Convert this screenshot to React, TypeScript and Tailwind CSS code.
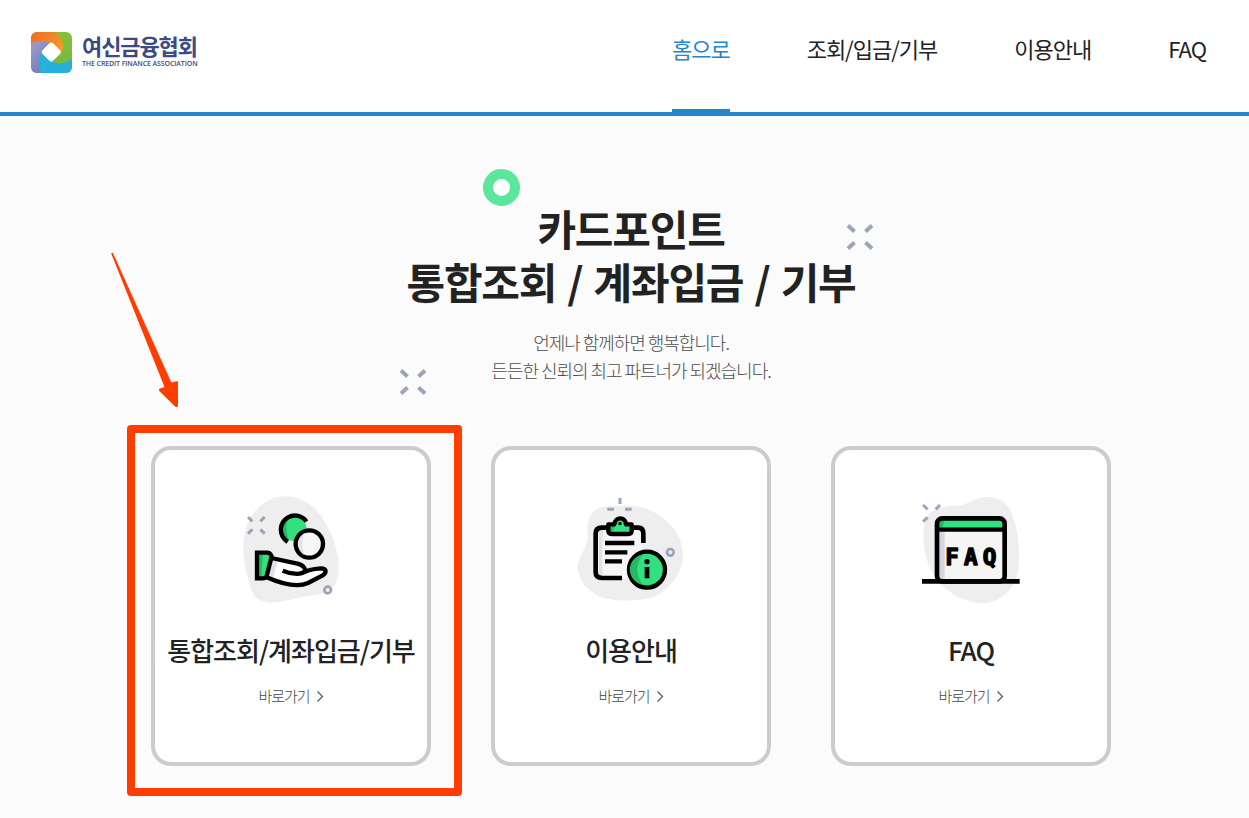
import type { ReactNode } from "react";

const navItems = [
  { name: "홈으로", active: true },
  { name: "조회/입금/기부", active: false },
  { name: "이용안내", active: false },
  { name: "FAQ", active: false },
];

const Logo = () => (
  <svg width="41" height="41" viewBox="0 0 41 41">
    <defs>
      <clipPath id="logo-clip">
        <rect width="41" height="41" rx="6" />
      </clipPath>
      <linearGradient id="logo-orange" x1="0" y1="0" x2="1" y2="0.6">
        <stop offset="0" stopColor="#ee6a2c" />
        <stop offset="1" stopColor="#f39a1f" />
      </linearGradient>
      <linearGradient id="logo-green" x1="0" y1="0" x2="0" y2="1">
        <stop offset="0" stopColor="#86bf3a" />
        <stop offset="1" stopColor="#6fb844" />
      </linearGradient>
      <linearGradient id="logo-cyan" x1="1" y1="0" x2="0" y2="1">
        <stop offset="0" stopColor="#2fa9d8" />
        <stop offset="1" stopColor="#1fb6dd" />
      </linearGradient>
      <linearGradient id="logo-purple" x1="0" y1="0" x2="0.6" y2="1">
        <stop offset="0" stopColor="#a09ccd" />
        <stop offset="1" stopColor="#6f7cbc" />
      </linearGradient>
    </defs>
    <g clipPath="url(#logo-clip)">
      <rect width="41" height="41" fill="url(#logo-green)" />
      <path d="M0 0H24C32 5 34 13 30 22L20 12L0 14Z" fill="url(#logo-orange)" />
      <path d="M0 12C8 8 15 9 20 12L11 21C8 28 9 35 12 41H0Z" fill="url(#logo-purple)" />
      <path d="M10 20L21 30C29 33 36 31 41 26V41H11C7 34 7 27 10 20Z" fill="url(#logo-cyan)" />
      <rect x="12.8" y="12.6" width="15" height="15" rx="3" transform="rotate(45 20.3 20.1)" fill="#fff" />
    </g>
  </svg>
);

const Sparkle = () => (
  <svg width="28" height="28" viewBox="0 0 28 28" stroke="#9aa5b8" strokeWidth="4">
    <path d="M2 2.5L8.5 8.5M26 2.5L19.5 8.5M2 25.5L8.5 19.5M26 25.5L19.5 19.5" />
  </svg>
);

const HandIcon = () => (
  <svg width="130" height="130" viewBox="-12 0 390 390" fill="none">
    <path d="M158 34C215 28 262 66 288 118C311 158 327 205 326 252C325 301 300 325 262 329C211 333 168 351 125 353C82 352 67 331 60 302C48 257 37 219 40 175C44 98 94 38 158 34Z" fill="#eee" />
    <path d="M54 96L67 109M104 96L91 109M54 146L67 133M104 146L91 133" stroke="#9aa5b8" strokeWidth="9" />
    <circle cx="293" cy="315" r="10" stroke="#9aa5b8" strokeWidth="8" />
    <circle cx="191" cy="130" r="38" fill="#33e07f" />
    <path d="M178 94C151 104 150 151 178 166C167 145 167 115 178 94Z" fill="#26b863" />
    <path d="M229 110C218 91 192 87 174 97C147 113 144 150 173 171" stroke="#000" strokeWidth="13" />
    <circle cx="238" cy="177" r="41" fill="#f6f6f6" stroke="#000" strokeWidth="13" />
    <path d="M224 144C200 156 200 198 224 210C214 189 214 165 224 144Z" fill="#dfe2e8" />
    <path d="M124 219L205 237C222 242 231 252 219 264L272 249C286 247 293 257 283 267L233 296C207 305 172 300 108 276Z" fill="#fff" />
    <path d="M124 225L142 230L129 280L111 273Z" fill="#dfe2e8" />
    <path d="M81 203H115L125 213L109 280H81Z" fill="#33e07f" />
    <path d="M82 204H99L94 280H82Z" fill="#26b863" />
    <path d="M81 203H113C121 204 126 211 124 218L110 273C108 278 105 280 99 280H81Z" stroke="#000" strokeWidth="13" />
    <path d="M124 219L202 236C221 240 232 255 219 263C210 269 183 267 158 257M218 264C231 255 259 251 273 250C291 250 290 264 278 271L234 294C207 306 165 301 108 276" stroke="#000" strokeWidth="13" />
  </svg>
);

const GuideIcon = () => (
  <svg width="130" height="130" viewBox="3 0 390 390" fill="none">
    <path d="M73 100C83 70 110 62 151 64C201 57 249 66 284 92C326 122 353 157 354 211C351 265 320 304 280 329C231 350 173 351 116 339C70 324 41 288 38 246C39 213 72 184 68 145C66 125 68 111 73 100Z" fill="#eee" />
    <path d="M165 39V57M127 73H147M180 73H200" stroke="#9aa5b8" strokeWidth="9" />
    <circle cx="316" cy="202" r="10" stroke="#9aa5b8" strokeWidth="8" />
    <rect x="94" y="129" width="141" height="150" rx="14" fill="#f6f6f6" />
    <path d="M101 139V271L115 279C111 247 110 159 115 134Z" fill="#dfe2e8" />
    <path d="M130 128H111C98 128 92 134 92 146V262C92 274 98 279 111 279H171M205 128H219C230 128 235 134 235 146V174" stroke="#000" strokeWidth="14" />
    <path d="M134 118H148C151 94 181 96 182 118H196V144H134Z" fill="#33e07f" />
    <path d="M134 118H149L154 104C160 113 146 128 141 144H134Z" fill="#26b863" />
    <path d="M130 118H148C151 94 181 94 183 118H200V138C200 144 196 147 190 147H140C134 147 130 144 130 138Z" stroke="#000" strokeWidth="13" strokeLinejoin="round" />
    <circle cx="165" cy="116" r="5" fill="#000" />
    <path d="M120 174H208M120 202H187M120 229H171" stroke="#000" strokeWidth="13" />
    <circle cx="246" cy="254" r="54" fill="#33e07f" stroke="#000" strokeWidth="13" />
    <path d="M234 208C181 219 182 289 234 300C211 270 211 238 234 208Z" fill="#26b863" />
    <circle cx="246" cy="230" r="8" fill="#000" />
    <path d="M246 246V280" stroke="#000" strokeWidth="14" />
  </svg>
);

const FaqIcon = () => (
  <svg width="130" height="130" viewBox="3 0 390 390" fill="none">
    <path d="M155 62C191 59 211 36 249 36C292 37 316 63 326 103C342 147 347 210 338 260C326 325 273 354 231 354C180 352 132 326 101 290C67 246 51 194 56 137C58 92 77 63 155 62Z" fill="#eee" />
    <path d="M54 60L68 73M105 60L92 73M54 110L68 97" stroke="#9aa5b8" strokeWidth="9" />
    <rect x="96" y="100" width="203" height="189" rx="12" fill="#f5f5f4" />
    <path d="M102 140H119V284H108L102 277Z" fill="#d3d7e0" />
    <path d="M96 132V114C96 105 101 100 110 100H285C294 100 299 105 299 114V132Z" fill="#33e07f" />
    <path d="M102 128V112C105 107 109 106 118 106L113 128Z" fill="#26b863" />
    <rect x="96" y="100" width="203" height="189" rx="16" stroke="#000" strokeWidth="14" />
    <path d="M96 134H299" stroke="#000" strokeWidth="13" />
    <path d="M51 289H344" stroke="#000" strokeWidth="14" />
    <text
      x="121 177 233"
      y="239"
      fontSize="68"
      fontWeight="700"
      fontFamily="'DejaVu Sans Mono', monospace"
      stroke="#000"
      strokeWidth="4"
      strokeLinejoin="round"
      fill="#000"
    >
      FAQ
    </text>
  </svg>
);

const menus: { title: string; icon: ReactNode }[] = [
  { title: "통합조회/계좌입금/기부", icon: <HandIcon /> },
  { title: "이용안내", icon: <GuideIcon /> },
  { title: "FAQ", icon: <FaqIcon /> },
];

const Header = () => (
  <header className="flex h-[116px] justify-between border-b-4 border-[#2485c8] bg-white pr-[43px] pl-[31px]">
    <div className="flex items-start gap-[10px] pt-[32px]">
      <Logo />
      <div className="w-[120px] whitespace-nowrap text-[#3b4a83]">
        <p className="text-[22px] leading-[27px] font-bold tracking-[-1.1px]">여신금융협회</p>
        <p className="font-['Open_Sans',sans-serif] text-[7px] leading-[10px] font-semibold tracking-[-0.1px]">
          THE CREDIT FINANCE ASSOCIATION
        </p>
      </div>
    </div>
    <nav className="flex gap-[77px]">
      {navItems.map((item) => (
        <a
          key={item.name}
          className={`h-[112px] pt-[32px] text-[22px] leading-[32px] tracking-[-1px] whitespace-nowrap ${
            item.active ? "border-b-[3px] border-[#2485c8] text-[#2485c8]" : "text-[#222]"
          }`}
        >
          {item.name}
        </a>
      ))}
    </nav>
  </header>
);

const App = () => {
  return (
    <div className="relative h-[818px] w-[1249px] overflow-hidden bg-[#fbfbfb] font-['Noto_Sans_CJK_KR',sans-serif]">
      <Header />

      <main className="ml-[151px] w-[960px]">
        <section className="pt-[85px] text-center">
          <h1 className="text-[42px] leading-[53px] font-bold tracking-[-1.2px] text-[#222] [word-spacing:2.8px]">
            카드포인트
            <br />
            통합조회 / 계좌입금 / 기부
          </h1>
          <p className="mt-[21px] text-[18px] leading-[28px] font-light tracking-[-1.03px] text-[#4d4d4d]">
            언제나 함께하면 행복합니다.
            <br />
            든든한 신뢰의 최고 파트너가 되겠습니다.
          </p>
        </section>

        <section className="mt-[62px] flex gap-[60px]">
          {menus.map((menu) => (
            <a
              key={menu.title}
              className="flex h-[320px] w-[280px] flex-col items-center rounded-[20px] border-4 border-[#ccc] bg-white pt-[35px]"
            >
              {menu.icon}
              <h2 className="mt-[15px] text-[26px] leading-[40px] font-medium tracking-[-1px] whitespace-nowrap text-[#222]">
                {menu.title}
              </h2>
              <span className="mt-[14px] flex items-center gap-[7px] text-[15px] leading-[24px] font-light tracking-[-1px] text-[#444]">
                바로가기
                <svg width="7" height="12" viewBox="0 0 7 12" fill="none" stroke="#555" strokeWidth="1.2">
                  <path d="M0.5 1.5L5.5 6.5L0.5 11.5" />
                </svg>
              </span>
            </a>
          ))}
        </section>
      </main>

      {/* floating decorations */}
      <div className="absolute top-[169px] left-[483px] size-[37px] rounded-full border-[10px] border-[#5be69b] bg-white" />
      <div className="absolute top-[223px] left-[846px]">
        <Sparkle />
      </div>
      <div className="absolute top-[368px] left-[399px]">
        <Sparkle />
      </div>

      {/* highlight */}
      <svg className="absolute top-[250px] left-[108px]" width="74" height="160" viewBox="0 0 74 160">
        <path
          d="M3.2 3.5Q4.3 2 5.3 3.8L63.4 132.6L68.5 131.2Q70 131 70 132.6V155.5Q69.5 158.5 67 156.5L51.3 141Q50.3 139.2 52 138.6L56.5 137Z"
          fill="#ff3d00"
        />
      </svg>
      <div className="absolute top-[425px] left-[127px] h-[371px] w-[335px] rounded-[4px] border-8 border-[#ff3d00]" />
    </div>
  );
};

export default App;
